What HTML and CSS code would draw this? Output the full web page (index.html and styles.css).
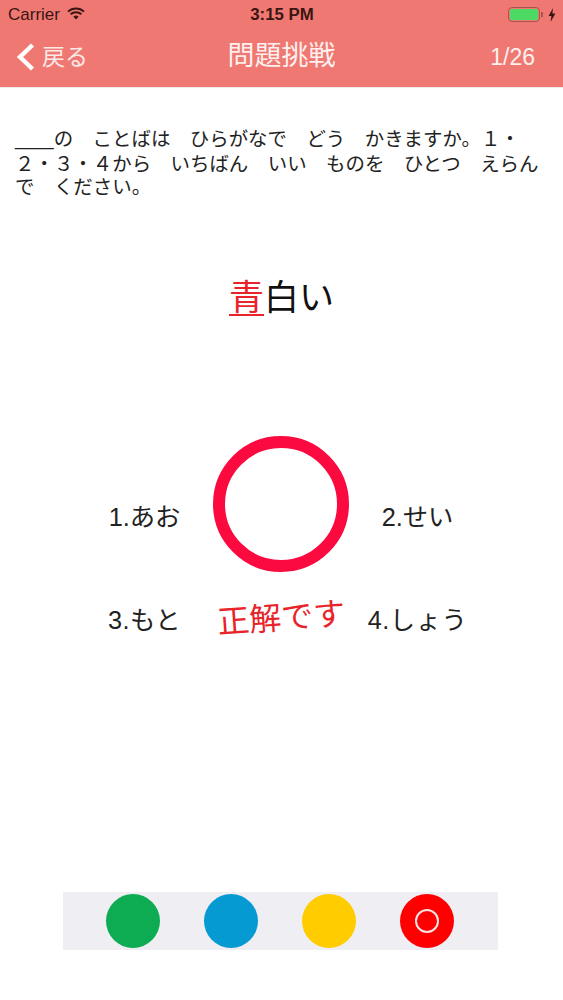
FILE: index.html
```html
<!DOCTYPE html>
<html lang="ja">
<head>
<meta charset="utf-8">
<title>問題挑戦</title>
<link rel="stylesheet" href="styles.css">
</head>
<body>
<div class="app">
  <header class="header">
    <div class="status">
      <div class="status-left">
        <span>Carrier</span>
        <svg class="wifi" viewBox="0 0 18 13" width="18" height="13"><path d="M9 12.6 6.4 9.7a3.8 3.8 0 0 1 5.2 0Z" fill="#3a1512"/><path d="M1 4.6a11.6 11.6 0 0 1 16 0M3.6 7.3a8 8 0 0 1 10.8 0" fill="none" stroke="#3a1512" stroke-width="2"/></svg>
      </div>
      <div class="status-time">3:15 PM</div>
      <div class="status-right">
        <span class="battery"><span class="battery-fill"></span></span>
        <span class="battery-tip"></span>
        <svg viewBox="0 0 8 14" width="8" height="14"><path d="M5 0 0.6 8H3.4L2.6 14 7.4 5.6H4.4Z" fill="#3a1512"/></svg>
      </div>
    </div>
    <nav class="nav">
      <div class="back">
        <svg class="chevron" viewBox="0 0 20 30" width="20" height="30"><path d="M16.5 3 4 15 16.5 27" fill="none" stroke="#fff" stroke-width="4.4"/></svg>
        <span>戻る</span>
      </div>
      <div class="title">問題挑戦</div>
      <div class="count">1/26</div>
    </nav>
  </header>
  <main class="main">
    <p class="question"><span class="blank">____</span>の　ことばは　ひらがなで　どう　かきますか。１・<br>２・３・４から　いちばん　いい　ものを　ひとつ　えらん<br>で　ください。</p>
    <div class="word"><span class="word-mark">青</span>白い</div>
    <div class="quiz">
      <div class="opt">1.あお</div>
      <div class="ring"></div>
      <div class="opt">2.せい</div>
      <div class="opt opt-low">3.もと</div>
      <div class="result">正解です</div>
      <div class="opt opt-low">4.しょう</div>
    </div>
  </main>
  <footer class="picker">
    <div class="dot dot-green"></div>
    <div class="dot dot-blue"></div>
    <div class="dot dot-yellow"></div>
    <div class="dot dot-red"><span class="mini-ring"></span></div>
  </footer>
</div>
</body>
</html>
```
FILE: styles.css
```css
* { box-sizing: border-box; }
html, body { margin: 0; padding: 0; background: #fff; }
body { font-family: "Liberation Sans", "Noto Sans CJK JP", sans-serif; color: #1a1a1a; }
.app { width: 563px; height: 1000px; display: flex; flex-direction: column; overflow: hidden; }
.header { height: 87px; background: #f07872; box-shadow: 0 1px 1px rgba(0,0,0,.08); flex: none; }
.status { height: 29px; padding: 0 7px 0 8px; display: grid; grid-template-columns: 1fr auto 1fr; align-items: center; color: #3a1512; font-size: 17px; }
.status-left { display: flex; align-items: center; gap: 7px; }
.wifi { margin-top: -3px; }
.status-time { font-weight: 700; font-size: 16.8px; color: #3a1512; }
.status-right { display: flex; align-items: center; justify-content: flex-end; }
.battery { width: 32px; height: 15px; border: 1.5px solid #a5574f; border-radius: 4px; padding: 1px; display: flex; }
.battery-fill { flex: 1; background: #4cd964; border-radius: 1.5px; }
.battery-tip { width: 2px; height: 5px; background: #a5574f; margin: 0 5px 0 1px; }
.nav { height: 58px; padding: 0 28px 6px 16px; display: grid; grid-template-columns: 1fr auto 1fr; align-items: center; color: #fff; }
.back { display: flex; align-items: center; gap: 6px; font-size: 23px; color: #fbe9e7; }
.chevron { margin-top: 3px; }
.title { font-size: 27px; color: #fdf0ee; margin: -4px 0 0 12px; }
.count { font-size: 23px; text-align: right; color: #fdf0ee; padding-top: 4px; }
.main { flex: 1; padding-top: 41px; }
.question { margin: 0; padding: 0 15px; font-size: 19.45px; line-height: 23.5px; height: 72px; white-space: nowrap; color: #222; }
.blank { font-size: 17.4px; }
.word { margin-top: 73px; text-align: center; font-size: 35px; line-height: 50px; color: #111; }
.word-mark { color: #e8242a; border-bottom: 2px solid #e8242a; display: inline-block; line-height: 33px; }
.quiz { margin: 113px 0 0 76px; width: 410px; display: grid; grid-template-columns: 137px 136px 137px; grid-template-rows: 136px auto; align-items: center; justify-items: center; }
.opt { font-size: 25.3px; color: #222; padding-top: 22px; white-space: nowrap; }
.opt-low { padding-top: 0; margin-top: 25px; letter-spacing: .5px; }
.ring { width: 136px; height: 136px; border: 12px solid #fb0a3f; border-radius: 50%; }
.result { font-size: 32px; color: #e8242a; transform: rotate(-4deg); white-space: nowrap; margin-top: 20px; }
.picker { flex: none; margin: 0 65px 50px 63px; height: 58px; background: #eeeef3; display: flex; justify-content: space-between; align-items: center; padding: 0 44px 0 43px; }
.dot { width: 54px; height: 54px; border-radius: 50%; display: flex; align-items: center; justify-content: center; }
.dot-green { background: #0dab52; }
.dot-blue { background: #069ad2; }
.dot-yellow { background: #ffcc00; }
.dot-red { background: #fe0000; }
.mini-ring { width: 24px; height: 24px; border: 2px solid #fbe5e5; border-radius: 50%; }
```
